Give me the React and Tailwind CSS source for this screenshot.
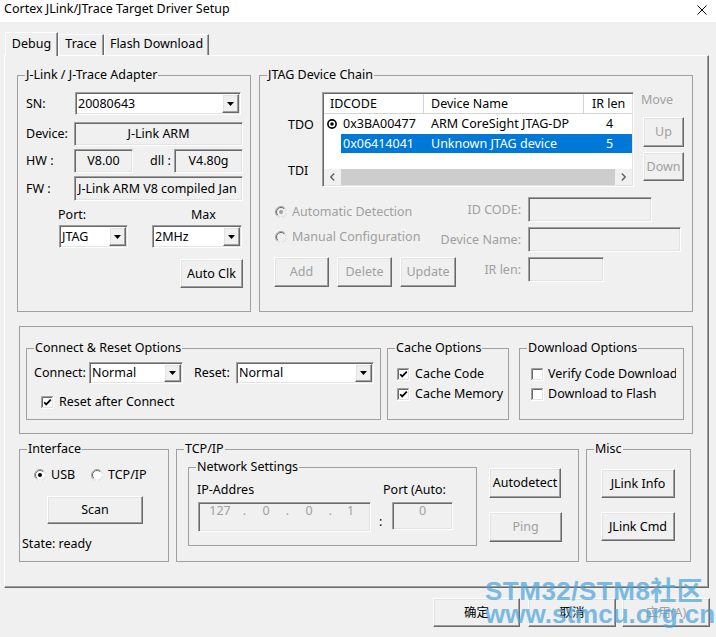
import React from "react";

const sunken =
  "border border-t-[#a0a0a0] border-l-[#a0a0a0] border-b-white border-r-white shadow-[inset_1px_1px_0_#696969,inset_-1px_-1px_0_#e3e3e3]";
const raised =
  "border border-t-white border-l-white border-b-[#696969] border-r-[#696969] shadow-[inset_-1px_-1px_0_#a0a0a0,inset_1px_1px_0_#e3e3e3]";

function Arrow() {
  return (
    <svg width="7" height="4" viewBox="0 0 7 4">
      <path d="M0 0H7L3.5 4Z" fill="#000" />
    </svg>
  );
}

function Combo({ className, value }) {
  return (
    <div className={`${sunken} bg-white flex shrink-0 p-[1px] ${className}`}>
      <div className="flex-1 pl-[1px] flex items-center whitespace-nowrap overflow-hidden">{value}</div>
      <div className={`${raised} bg-[#f0f0f0] w-[17px] flex items-center justify-center`}>
        <Arrow />
      </div>
    </div>
  );
}

function Btn({ className = "", children, disabled }) {
  return (
    <div
      className={`${raised} bg-[#f0f0f0] flex items-center justify-center shrink-0 whitespace-nowrap ${
        disabled ? "text-[#a0a0a0]" : ""
      } ${className}`}
    >
      {children}
    </div>
  );
}

function Radio({ checked, disabled }) {
  const bg = disabled ? "#f0f0f0" : "#ffffff";
  const dot = disabled ? "#a0a0a0" : "#000000";
  return (
    <svg width="12" height="12" viewBox="0 0 12 12" className="shrink-0">
      <circle cx="6" cy="6" r="5.5" fill={bg} stroke="#a0a0a0" />
      <path d="M2.1 9.9 A5.5 5.5 0 0 0 9.9 2.1" stroke="#ffffff" fill="none" />
      <path d="M2.8 9.2 A4.5 4.5 0 0 1 9.2 2.8" stroke="#696969" fill="none" />
      {checked && <circle cx="6" cy="6" r="2" fill={dot} />}
    </svg>
  );
}

function Check({ checked }) {
  return (
    <svg width="13" height="13" viewBox="0 0 13 13" className="shrink-0">
      <rect x="0" y="0" width="13" height="13" fill="#ffffff" />
      <path d="M0.5 12.5V0.5H12.5" stroke="#a0a0a0" fill="none" />
      <path d="M1.5 11.5V1.5H11.5" stroke="#696969" fill="none" />
      <path d="M12.5 0V12.5H0" stroke="#ffffff" fill="none" />
      <path d="M11.5 1V11.5H1" stroke="#e3e3e3" fill="none" />
      {checked && (
        <path d="M3.2 6.2L5.2 8.4L9.8 3.6" stroke="#000" strokeWidth="1.7" fill="none" />
      )}
    </svg>
  );
}

function Group({ title, className = "", children }) {
  return (
    <fieldset className={`border border-[#a0a0a0] shrink-0 min-w-0 ${className}`}>
      {title && (
        <legend className="ml-[7px] px-[1px] leading-[16px] whitespace-nowrap">{title}</legend>
      )}
      {children}
    </fieldset>
  );
}

function Chevron({ dir }) {
  return (
    <svg width="5" height="8" viewBox="0 0 5 8">
      <path
        d={dir === "left" ? "M4.2 0.6L0.8 4L4.2 7.4" : "M0.8 0.6L4.2 4L0.8 7.4"}
        stroke="#606060"
        strokeWidth="1.4"
        fill="none"
      />
    </svg>
  );
}

function ChainList() {
  return (
    <div className={`${sunken} bg-white w-[312px] h-[95px] flex flex-col p-[1px] shrink-0`}>
      <div className="flex h-[20px] border-b border-[#d5d5d5] shrink-0">
        <div className="w-[100px] pl-[6px] flex items-center border-r border-[#d5d5d5]">IDCODE</div>
        <div className="w-[160px] pl-[7px] flex items-center border-r border-[#d5d5d5]">Device Name</div>
        <div className="flex-1 pl-[8px] flex items-center whitespace-nowrap">IR len</div>
      </div>
      <div className="flex h-[20px] items-center">
        <div className="w-[17px] pl-[3px] flex items-center">
          <svg width="10" height="10" viewBox="0 0 10 10">
            <circle cx="5" cy="5" r="4.1" fill="#fff" stroke="#000" strokeWidth="1.6" />
            <circle cx="5" cy="5" r="1.8" fill="#000" />
          </svg>
        </div>
        <div className="w-[83px] pl-[2px]">0x3BA00477</div>
        <div className="w-[160px] pl-[7px] whitespace-nowrap">ARM CoreSight JTAG-DP</div>
        <div className="flex-1 pl-[22px]">4</div>
      </div>
      <div className="flex h-[19px]">
        <div className="w-[17px]" />
        <div className="flex-1 flex items-center bg-[#0078d7] text-white">
          <div className="w-[83px] pl-[2px]">0x06414041</div>
          <div className="w-[160px] pl-[7px] whitespace-nowrap">Unknown JTAG device</div>
          <div className="flex-1 pl-[22px]">5</div>
        </div>
      </div>
      <div className="mt-auto h-[16px] flex shrink-0 bg-[#f0f0f0]">
        <div className="w-[17px] flex items-center justify-center">
          <Chevron dir="left" />
        </div>
        <div className="flex-1 bg-[#cdcdcd]" />
        <div className="w-[17px] flex items-center justify-center">
          <Chevron dir="right" />
        </div>
      </div>
    </div>
  );
}

function FieldRow({ label, w }) {
  return (
    <div className="flex items-center h-[25px]">
      <span className="w-[87px] text-right whitespace-nowrap">{label}</span>
      <div className={`${sunken} ml-[7px] h-[25px] bg-[#f0f0f0] ${w}`} />
    </div>
  );
}

export default function App() {
  return (
    <div className="relative w-[716px] h-[637px] bg-[#f0f0f0] overflow-hidden font-['Noto_Sans','Noto_Sans_CJK_SC',sans-serif] text-[12.5px] leading-[16px] text-black">
      {/* Title bar */}
      <div className="h-[22px] bg-white flex items-start justify-between">
        <span className="ml-[4px] mt-[1px]">Cortex JLink/JTrace Target Driver Setup</span>
        <svg className="mt-[5px] mr-[9px]" width="10" height="10" viewBox="0 0 10 10">
          <path d="M0.5 0.5L9.5 9.5M9.5 0.5L0.5 9.5" stroke="#000" strokeWidth="1" />
        </svg>
      </div>

      {/* Tabs */}
      <div className="relative z-10 flex items-end ml-[5px] mt-[10px] h-[23px]">
        <div className="h-[24px] -mb-px w-[53px] bg-[#f0f0f0] border-l border-t border-r border-l-white border-t-white border-r-[#696969] shadow-[inset_-1px_0_0_#a0a0a0] flex justify-center pt-[3px]">
          Debug
        </div>
        <div className="h-[21px] w-[46px] border-l border-t border-r border-l-white border-t-white border-r-[#696969] shadow-[inset_-1px_0_0_#a0a0a0] flex justify-center pt-[1px]">
          Trace
        </div>
        <div className="h-[21px] w-[105px] border-l border-t border-r border-l-white border-t-white border-r-[#696969] shadow-[inset_-1px_0_0_#a0a0a0] flex justify-center pt-[1px]">
          Flash Download
        </div>
      </div>

      {/* Tab panel */}
      <div className="ml-[4px] w-[705px] h-[533px] border border-t-white border-l-white border-r-[#696969] border-b-[#696969] shadow-[inset_-1px_-1px_0_#a0a0a0]">
        {/* Row 1 */}
        <div className="flex mt-[11px] ml-[12px]">
          <Group title="J-Link / J-Trace Adapter" className="w-[234px] h-[245px]">
            <div className="flex items-center mt-[9px]">
              <span className="ml-[8px] w-[49px]">SN:</span>
              <Combo className="w-[166px] h-[23px]" value="20080643" />
            </div>
            <div className="flex items-center mt-[7px]">
              <span className="ml-[8px] w-[48px]">Device:</span>
              <div className={`${sunken} w-[169px] h-[24px] flex items-center justify-center`}>J-Link ARM</div>
            </div>
            <div className="flex items-center mt-[3px]">
              <span className="ml-[8px] w-[48px]">HW :</span>
              <div className={`${sunken} w-[59px] h-[24px] flex items-center justify-center`}>V8.00</div>
              <span className="ml-[17px] w-[24px] whitespace-nowrap">dll :</span>
              <div className={`${sunken} w-[69px] h-[24px] flex items-center justify-center`}>V4.80g</div>
            </div>
            <div className="flex items-center mt-[3px]">
              <span className="ml-[8px] w-[48px]">FW :</span>
              <div className={`${sunken} w-[169px] h-[25px] flex items-center pl-[3px] overflow-hidden whitespace-nowrap`}>
                J-Link ARM V8 compiled Jan
              </div>
            </div>
            <div className="flex mt-[6px] ml-[40px]">
              <span className="w-[133px]">Port:</span>
              <span>Max</span>
            </div>
            <div className="flex mt-[2px] ml-[41px]">
              <Combo className="w-[69px] h-[23px]" value="JTAG" />
              <Combo className="ml-[24px] w-[90px] h-[23px]" value="2MHz" />
            </div>
            <Btn className="ml-[162px] mt-[11px] w-[63px] h-[29px]">Auto Clk</Btn>
          </Group>

          <Group title="JTAG Device Chain" className="ml-[8px] w-[434px] h-[245px]">
            <div className="flex mt-[9px]">
              <div className="ml-[28px] w-[34px] flex flex-col shrink-0">
                <span className="mt-[25px]">TDO</span>
                <span className="mt-[30px]">TDI</span>
              </div>
              <ChainList />
              <div className="ml-[7px] flex flex-col">
                <span className="text-[#a0a0a0]">Move</span>
                <Btn disabled className="ml-[2px] mt-[9px] w-[41px] h-[30px]">Up</Btn>
                <Btn disabled className="ml-[2px] mt-[5px] w-[41px] h-[29px]">Down</Btn>
              </div>
            </div>
            <div className="flex mt-[10px] text-[#a0a0a0]">
              <div className="ml-[14px] w-[160px] flex flex-col shrink-0">
                <div className="flex items-center mt-[7px] ml-[1px] gap-[5px] whitespace-nowrap">
                  <Radio checked disabled />
                  Automatic Detection
                </div>
                <div className="flex items-center mt-[9px] ml-[1px] gap-[5px] whitespace-nowrap">
                  <Radio disabled />
                  Manual Configuration
                </div>
                <div className="flex mt-[12px] gap-[8px]">
                  <Btn disabled className="w-[55px] h-[30px]">Add</Btn>
                  <Btn disabled className="w-[55px] h-[30px]">Delete</Btn>
                  <Btn disabled className="w-[56px] h-[30px]">Update</Btn>
                </div>
              </div>
              <div className="flex flex-col gap-[5px]">
                <FieldRow label="ID CODE:" w="w-[124px]" />
                <FieldRow label="Device Name:" w="w-[153px]" />
                <FieldRow label="IR len:" w="w-[76px]" />
              </div>
            </div>
          </Group>
        </div>

        {/* Middle options box */}
        <div className="ml-[14px] mt-[14px] w-[674px] h-[108px] border border-[#a0a0a0] flex items-start">
          <Group title="Connect & Reset Options" className="ml-[6px] mt-[13px] w-[355px] h-[80px]">
            <div className="flex items-center mt-[6px]">
              <span className="ml-[7px] w-[55px]">Connect:</span>
              <Combo className="w-[94px] h-[22px]" value="Normal" />
              <span className="ml-[11px] w-[42px]">Reset:</span>
              <Combo className="w-[138px] h-[22px]" value="Normal" />
            </div>
            <div className="flex items-center h-[16px] mt-[10px] ml-[14px]">
              <Check checked />
              <span className="ml-[5px]">Reset after Connect</span>
            </div>
          </Group>
          <Group title="Cache Options" className="ml-[6px] mt-[13px] w-[122px] h-[80px]">
            <div className="flex items-center h-[16px] mt-[10px] ml-[9px]">
              <Check checked />
              <span className="ml-[5px] whitespace-nowrap">Cache Code</span>
            </div>
            <div className="flex items-center h-[16px] mt-[4px] ml-[9px]">
              <Check checked />
              <span className="ml-[5px] whitespace-nowrap">Cache Memory</span>
            </div>
          </Group>
          <Group title="Download Options" className="ml-[10px] mt-[13px] w-[165px] h-[80px]">
            <div className="flex items-center h-[16px] mt-[10px] ml-[11px]">
              <Check />
              <span className="ml-[4px] w-[128px] overflow-hidden whitespace-nowrap">Verify Code Download</span>
            </div>
            <div className="flex items-center h-[16px] mt-[4px] ml-[11px]">
              <Check />
              <span className="ml-[4px] whitespace-nowrap">Download to Flash</span>
            </div>
          </Group>
        </div>

        {/* Bottom row */}
        <div className="flex ml-[14px] mt-[7px] items-start">
          <Group title="Interface" className="w-[150px] h-[121px]">
            <div className="flex items-center mt-[10px] ml-[14px]">
              <Radio checked />
              <span className="ml-[5px] w-[40px]">USB</span>
              <Radio />
              <span className="ml-[5px]">TCP/IP</span>
            </div>
            <Btn className="ml-[27px] mt-[13px] w-[96px] h-[28px]">Scan</Btn>
            <div className="ml-[2px] mt-[12px]">State: ready</div>
          </Group>

          <Group title="TCP/IP" className="ml-[7px] w-[403px] h-[121px]">
            <div className="flex items-start">
              <Group title="Network Settings" className="ml-[11px] mt-[2px] w-[289px] h-[87px]">
                <div className="flex mt-[7px]">
                  <div className="ml-[8px] flex flex-col">
                    <span className="w-[57px] overflow-hidden whitespace-nowrap">IP-Address</span>
                    <div className={`${sunken} ml-[1px] mt-[4px] w-[173px] h-[30px] flex text-[#a0a0a0]`}>
                      <span className="w-[42px] text-center">127</span>
                      <span className="w-[7px] text-center">.</span>
                      <span className="w-[36px] text-center">0</span>
                      <span className="w-[7px] text-center">.</span>
                      <span className="w-[36px] text-center">0</span>
                      <span className="w-[7px] text-center">.</span>
                      <span className="w-[33px] text-center">1</span>
                    </div>
                  </div>
                  <span className="w-[12px] pl-[8px] mt-[32px]">:</span>
                  <div className="flex flex-col">
                    <span className="whitespace-nowrap">Port (Auto:</span>
                    <div className={`${sunken} ml-[9px] mt-[4px] w-[61px] h-[28px] text-center text-[#a0a0a0]`}>0</div>
                  </div>
                </div>
              </Group>
              <div className="ml-[12px] mt-[11px] flex flex-col">
                <Btn className="w-[72px] h-[30px]">Autodetect</Btn>
                <Btn disabled className="mt-[14px] w-[73px] h-[30px]">Ping</Btn>
              </div>
            </div>
          </Group>

          <Group title="Misc" className="ml-[7px] w-[105px] h-[121px]">
            <Btn className="ml-[14px] mt-[12px] w-[74px] h-[29px]">JLink Info</Btn>
            <Btn className="ml-[14px] mt-[14px] w-[74px] h-[29px]">JLink Cmd</Btn>
          </Group>
        </div>
      </div>

      {/* Dialog buttons */}
      <div className="flex justify-end mr-[6px] mt-[10px]">
        <Btn className="w-[87px] h-[29px]">确定</Btn>
        <Btn className="ml-[8px] w-[88px] h-[29px]">取消</Btn>
        <Btn disabled className="ml-[6px] w-[88px] h-[29px]">应用(A)</Btn>
      </div>

      {/* Watermark */}
      <div className="absolute left-[485px] top-[580px] pointer-events-none font-['Liberation_Sans','Noto_Sans_CJK_SC',sans-serif] font-bold text-[26px] leading-[23px] text-[#4aa3dc] opacity-70 whitespace-nowrap">
        <div className="tracking-[0.5px]">STM32/STM8社区</div>
        <div>www.stmcu.org.cn</div>
      </div>
    </div>
  );
}
